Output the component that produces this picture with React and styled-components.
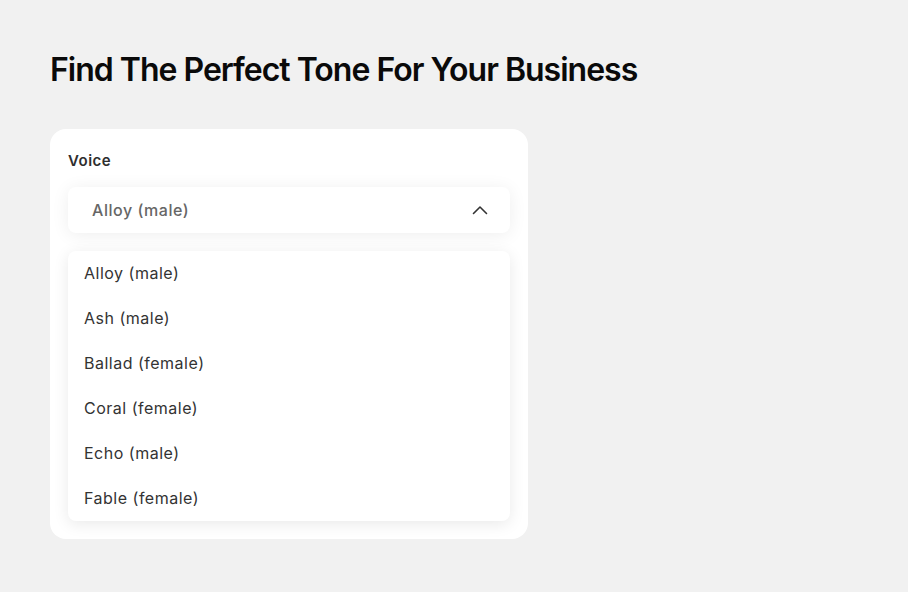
import React from "react";
import styled, { createGlobalStyle } from "styled-components";

const Global = createGlobalStyle`
  html, body {
    margin: 0;
    padding: 0;
    background: #f1f1f1;
    font-family: Inter, "Noto Sans", sans-serif;
  }
`;

const Page = styled.div`
  padding: 48px 50px;
`;

const Title = styled.h1`
  margin: 0 0 37px;
  font-size: 32px;
  line-height: 44px;
  font-weight: 600;
  letter-spacing: -1px;
  color: #0a0a0a;
`;

const Card = styled.div`
  width: 478px;
  box-sizing: border-box;
  padding: 18px;
  background: #fff;
  border-radius: 16px;
`;

const Label = styled.div`
  font-size: 15px;
  line-height: 28px;
  font-weight: 600;
  letter-spacing: 0.5px;
  color: #2e2e2e;
  margin-bottom: 12px;
`;

const Select = styled.div`
  height: 46px;
  display: flex;
  align-items: center;
  justify-content: space-between;
  padding: 0 22px 0 24px;
  background: #fff;
  border-radius: 8px;
  box-shadow: 0 2px 18px rgba(0, 0, 0, 0.07);
  font-size: 16px;
  font-weight: 500;
  letter-spacing: 0.55px;
  color: #666;
`;

const Menu = styled.ul`
  list-style: none;
  margin: 18px 0 0;
  padding: 0;
  background: #fff;
  border-radius: 8px;
  box-shadow: 0 3px 16px rgba(0, 0, 0, 0.09);
`;

const Item = styled.li`
  box-sizing: border-box;
  height: 45px;
  display: flex;
  align-items: center;
  padding: 0 16px 1px;
  font-size: 16px;
  letter-spacing: 0.5px;
  color: #333;
`;

const voices = [
  "Alloy (male)",
  "Ash (male)",
  "Ballad (female)",
  "Coral (female)",
  "Echo (male)",
  "Fable (female)",
];

export default function App() {
  return (
    <Page>
      <Global />
      <Title>Find The Perfect Tone For Your Business</Title>
      <Card>
        <Label>Voice</Label>
        <Select>
          <span>Alloy (male)</span>
          <svg width="16" height="10" viewBox="0 0 16 10" fill="none">
            <path d="M1.5 8.5L8 2l6.5 6.5" stroke="#333" strokeWidth="1.6" strokeLinecap="round" strokeLinejoin="round" />
          </svg>
        </Select>
        <Menu>
          {voices.map(v => (
            <Item key={v}>{v}</Item>
          ))}
        </Menu>
      </Card>
    </Page>
  );
}
